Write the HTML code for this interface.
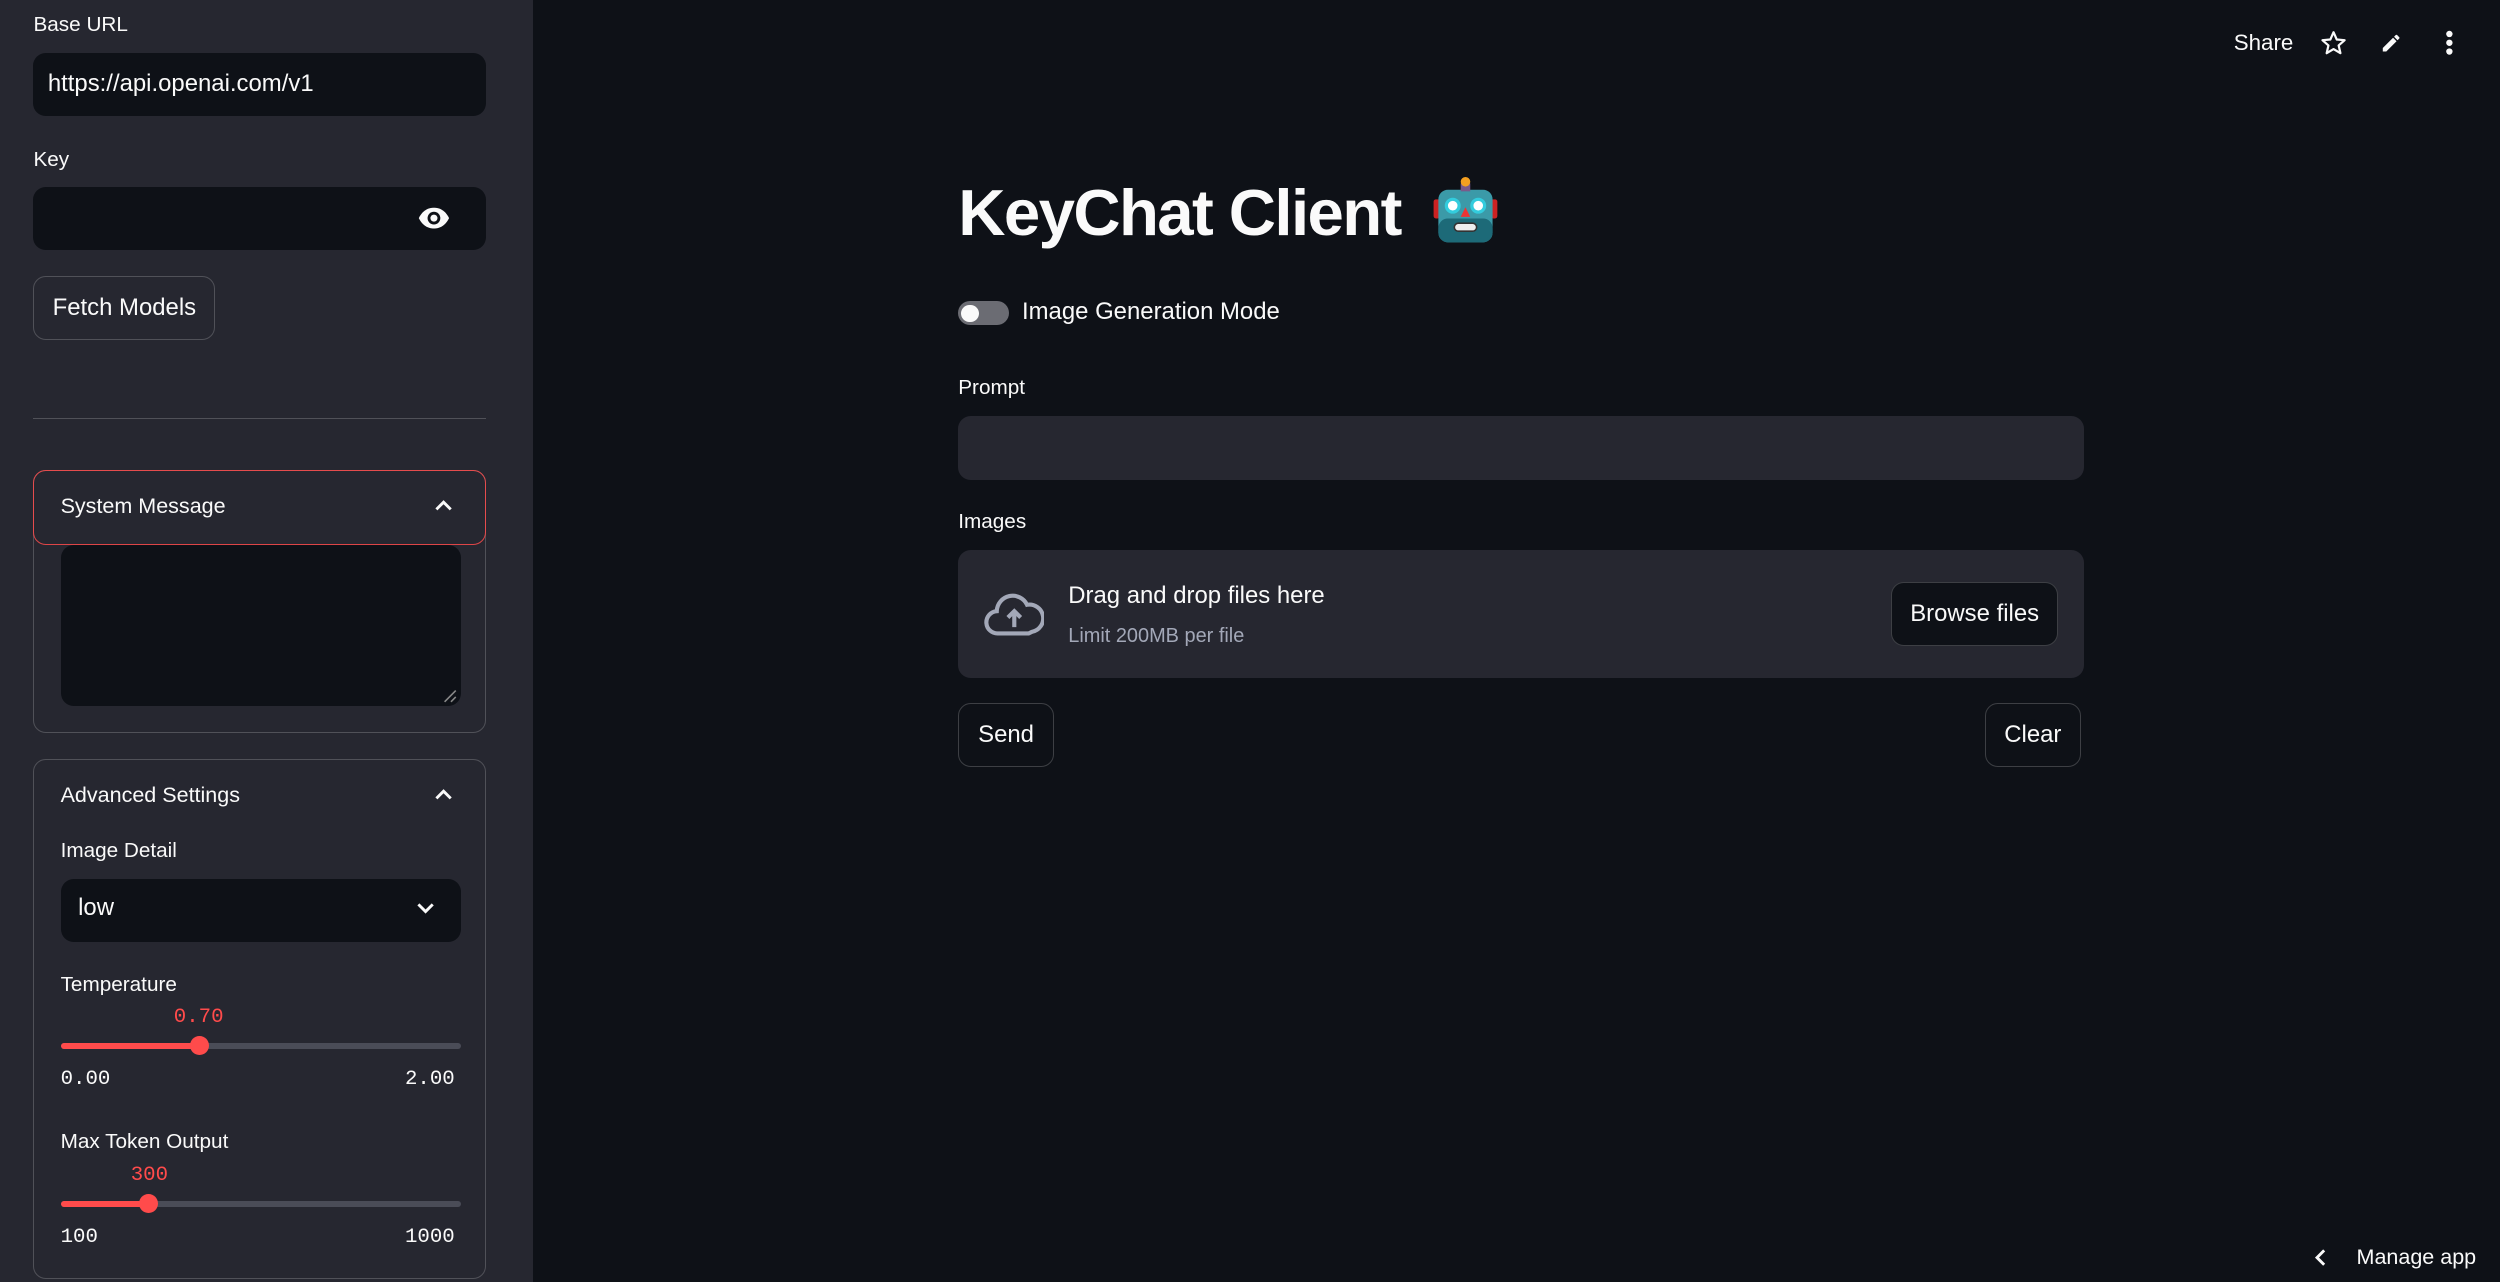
<!DOCTYPE html>
<html><head><meta charset="utf-8">
<style>
html,body{margin:0;padding:0;}
body{width:1568px;height:804px;zoom:1.5944;background:#0e1117;color:#fafafa;font-family:"Liberation Sans",sans-serif;position:relative;overflow:hidden;}
.a{position:absolute;}
.side{left:0;top:0;width:334px;height:804px;background:#262730;}
.lbl{font-size:13px;color:#fafafa;}
.inp{background:#0e1117;border-radius:8px;}
.btn{border:1px solid rgba(250,250,250,0.2);border-radius:8px;box-sizing:border-box;font-size:15px;display:flex;align-items:center;justify-content:center;}
.mono{font-family:"Liberation Mono",monospace;font-size:13px;}
.track{height:4px;border-radius:2px;background:#4a4c57;}
</style></head><body>
<div class="a side"></div>
<div class="a lbl" style="left:21px;top:8px;">Base URL</div>
<div class="a inp" style="left:21px;top:33px;width:284px;height:40px;"></div>
<div class="a" style="left:30px;top:44px;font-size:15px;">https://api.openai.com/v1</div>
<div class="a lbl" style="left:21px;top:93px;">Key</div>
<div class="a inp" style="left:21px;top:117px;width:284px;height:40px;"></div>
<svg class="a" style="left:262px;top:130px" width="20" height="14" viewBox="0 0 20 14"><path d="M0.5 7C3 2 6.5 0.5 10 0.5S17 2 19.5 7C17 12 13.5 13.5 10 13.5S3 12 0.5 7Z" fill="#fafafa"/><circle cx="10" cy="7" r="4" fill="#0e1117"/><circle cx="10" cy="7" r="2.2" fill="#fafafa"/></svg>
<div class="a btn" style="left:21px;top:173px;width:114px;height:40px;">Fetch Models</div>
<div class="a" style="left:21px;top:262px;width:284px;height:1px;background:rgba(250,250,250,0.2);"></div>

<div class="a" style="left:21px;top:295px;width:284px;height:165px;border:1px solid rgba(250,250,250,0.2);border-radius:8px;box-sizing:border-box;"></div>
<div class="a" style="left:21px;top:295px;width:284px;height:47px;border:1px solid #ff4b4b;border-radius:8px;box-sizing:border-box;opacity:.85"></div>
<div class="a" style="left:38px;top:310px;font-size:13.5px;">System Message</div>
<svg class="a" style="left:272px;top:313px" width="12" height="8" viewBox="0 0 12 8"><path d="M1.5 6.5L6 2L10.5 6.5" stroke="#fafafa" stroke-width="1.8" fill="none"/></svg>
<div class="a inp" style="left:38px;top:342px;width:251px;height:101px;"></div>
<svg class="a" style="left:278px;top:432px" width="9" height="9"><path d="M1 8L8 1M5 8L8 5" stroke="#888" stroke-width="1"/></svg>

<div class="a" style="left:21px;top:476px;width:284px;height:326px;border:1px solid rgba(250,250,250,0.2);border-radius:8px;box-sizing:border-box;"></div>
<div class="a" style="left:38px;top:491px;font-size:13.5px;">Advanced Settings</div>
<svg class="a" style="left:272px;top:494px" width="12" height="8" viewBox="0 0 12 8"><path d="M1.5 6.5L6 2L10.5 6.5" stroke="#fafafa" stroke-width="1.8" fill="none"/></svg>
<div class="a lbl" style="left:38px;top:526px;">Image Detail</div>
<div class="a inp" style="left:38px;top:551px;width:251px;height:40px;"></div>
<div class="a" style="left:49px;top:561px;font-size:15px;">low</div>
<svg class="a" style="left:261px;top:566px" width="12" height="8" viewBox="0 0 12 8"><path d="M1.5 1.5L6 6L10.5 1.5" stroke="#fafafa" stroke-width="1.8" fill="none"/></svg>
<div class="a lbl" style="left:38px;top:610px;">Temperature</div>
<div class="a mono" style="left:109px;top:631px;color:#ff4b4b;">0.70</div>
<div class="a track" style="left:38px;top:654px;width:251px;"></div>
<div class="a track" style="left:38px;top:654px;width:87px;background:#ff4b4b;"></div>
<div class="a" style="left:119px;top:650px;width:12px;height:12px;border-radius:50%;background:#ff4b4b;"></div>
<div class="a mono" style="left:38px;top:670px;">0.00</div>
<div class="a mono" style="left:254px;top:670px;">2.00</div>
<div class="a lbl" style="left:38px;top:709px;">Max Token Output</div>
<div class="a mono" style="left:82px;top:730px;color:#ff4b4b;">300</div>
<div class="a track" style="left:38px;top:753px;width:251px;"></div>
<div class="a track" style="left:38px;top:753px;width:55px;background:#ff4b4b;"></div>
<div class="a" style="left:87px;top:749px;width:12px;height:12px;border-radius:50%;background:#ff4b4b;"></div>
<div class="a mono" style="left:38px;top:769px;">100</div>
<div class="a mono" style="left:254px;top:769px;">1000</div>

<!-- top right -->
<div class="a" style="left:1401px;top:19px;font-size:14px;">Share</div>
<svg class="a" style="left:1455px;top:19px" width="17" height="16" viewBox="0 0 24 23"><path d="M12 2l2.9 6.6 7.1.6-5.4 4.7 1.6 7-6.2-3.7-6.2 3.7 1.6-7L2 9.2l7.1-.6z" fill="none" stroke="#fafafa" stroke-width="2" stroke-linejoin="round"/></svg>
<svg class="a" style="left:1493px;top:20px" width="14" height="14" viewBox="0 0 24 24"><path d="M3 17.25V21h3.75L17.81 9.94l-3.75-3.75zM20.71 7.04a1 1 0 000-1.41l-2.34-2.34a1 1 0 00-1.41 0l-1.83 1.83 3.75 3.75z" fill="#fafafa"/></svg>
<svg class="a" style="left:1532px;top:19px" width="8" height="16"><circle cx="4" cy="2.5" r="2" fill="#fafafa"/><circle cx="4" cy="8" r="2" fill="#fafafa"/><circle cx="4" cy="13.5" r="2" fill="#fafafa"/></svg>

<div class="a" style="left:601px;top:110px;font-size:41px;font-weight:bold;letter-spacing:-1px;">KeyChat Client</div>
<svg class="a" style="left:898px;top:111px" width="42" height="43" viewBox="0 0 42 43"><rect x="1" y="14" width="4" height="12" rx="1.5" fill="#c22"/><rect x="37" y="14" width="4" height="12" rx="1.5" fill="#c22"/><rect x="4" y="8" width="34" height="33" rx="6" fill="#3b9aa8"/><rect x="4" y="26" width="34" height="15" rx="6" fill="#1d6a78"/><rect x="18" y="4" width="6" height="5" fill="#7a5a8a"/><circle cx="21" cy="3" r="3" fill="#f4a020"/><circle cx="13" cy="18" r="4" fill="#fff" stroke="#3cd" stroke-width="2"/><circle cx="29" cy="18" r="4" fill="#fff" stroke="#3cd" stroke-width="2"/><path d="M21 19l3 6h-6z" fill="#e33"/><rect x="14" y="29" width="14" height="5" rx="2.5" fill="#eee" stroke="#333"/></svg>

<div class="a" style="left:601px;top:189px;width:32px;height:15px;border-radius:8px;background:#6b6c73;"></div>
<div class="a" style="left:603px;top:191px;width:11px;height:11px;border-radius:50%;background:#fafafa;"></div>
<div class="a" style="left:641px;top:187px;font-size:15px;">Image Generation Mode</div>

<div class="a lbl" style="left:601px;top:236px;">Prompt</div>
<div class="a" style="left:601px;top:261px;width:706px;height:40px;border-radius:8px;background:#262730;"></div>
<div class="a lbl" style="left:601px;top:320px;">Images</div>
<div class="a" style="left:601px;top:345px;width:706px;height:80px;border-radius:8px;background:#262730;"></div>
<svg class="a" style="left:617px;top:371px" width="38" height="28" viewBox="0 0 38 28"><path d="M10 26H9a7 7 0 01-1-14A10 10 0 0127 8a8 8 0 013 17l-2 1z" fill="none" stroke="#a3a8b8" stroke-width="2.6"/><path d="M19 22v-9M15 16l4-4 4 4" stroke="#a3a8b8" stroke-width="2.6" fill="none"/></svg>
<div class="a" style="left:670px;top:365px;font-size:15px;">Drag and drop files here</div>
<div class="a" style="left:670px;top:392px;font-size:12.5px;color:#a3a8b8;">Limit 200MB per file</div>
<div class="a btn" style="left:1186px;top:365px;width:105px;height:40px;background:#0e1117;">Browse files</div>
<div class="a btn" style="left:601px;top:441px;width:60px;height:40px;">Send</div>
<div class="a btn" style="left:1245px;top:441px;width:60px;height:40px;">Clear</div>

<svg class="a" style="left:1451px;top:783px" width="9" height="12"><path d="M7 1.5L2.5 6L7 10.5" stroke="#fafafa" stroke-width="1.8" fill="none"/></svg>
<div class="a" style="left:1478px;top:781px;font-size:13.5px;">Manage app</div>
</body></html>
